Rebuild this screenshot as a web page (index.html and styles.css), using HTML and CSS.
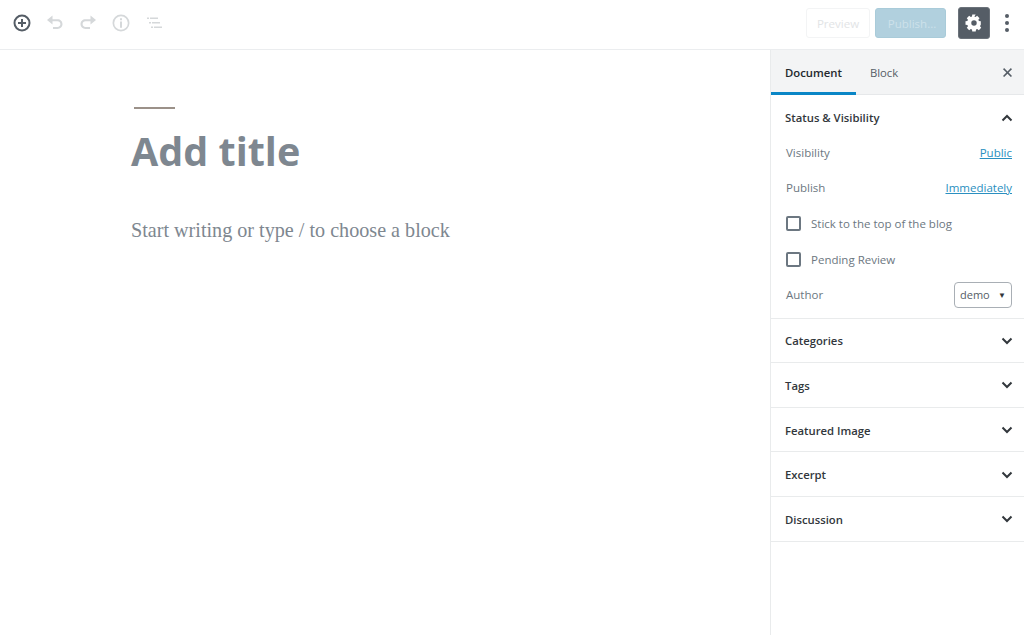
FILE: index.html
```html
<!DOCTYPE html>
<html lang="en">
<head>
    <meta charset="UTF-8">
    <meta name="viewport" content="width=device-width, initial-scale=1.0">
    <title>Add New Post</title>
    <link rel="stylesheet" href="styles.css">
</head>
<body>
    <header class="topbar">
        <div class="tools">
            <svg class="icon add" viewBox="0 0 20 20"><path d="M10 1.500a8.500 8.500 0 1 0 0 17 8.500 8.500 0 0 0 0-17zm0 2a6.500 6.500 0 1 1 0 13 6.500 6.500 0 0 1 0-13zM9 6v3H6v2h3v3h2v-3h3V9h-3V6z"/></svg>
            <svg class="icon off" viewBox="0 0 20 20"><path d="M7.500 2.500 2 7l5.500 4.500V8.200h5c1.700 0 2.900 1.200 2.900 2.900S14.200 14 12.500 14H8v2h4.500c2.900 0 5-2.100 5-4.900s-2.100-4.900-5-4.900h-5z"/></svg>
            <svg class="icon off" viewBox="0 0 20 20"><path d="M12.500 2.500 18 7l-5.500 4.500V8.200h-5c-1.700 0-2.900 1.200-2.900 2.900S5.800 14 7.500 14H12v2H7.500c-2.900 0-5-2.100-5-4.900s2.100-4.900 5-4.900h5z"/></svg>
            <svg class="icon off" viewBox="0 0 20 20"><path d="M10 1.500a8.500 8.500 0 1 0 0 17 8.500 8.500 0 0 0 0-17zm0 1.700a6.800 6.800 0 1 1 0 13.600 6.800 6.800 0 0 1 0-13.600zM9 5.200h2v2H9zm0 3.300h2v6.300H9z"/></svg>
            <svg class="icon off" viewBox="0 0 20 20"><path d="M3 4.500h2v1.400H3zm3 0h8v1.400H6zM5 9h2v1.400H5zm3 0h8v1.400H8zM7 13.500h2v1.400H7zm3 0h8v1.400h-8z"/></svg>
        </div>
        <div class="actions">
            <button class="btn-preview">Preview</button>
            <button class="btn-publish">Publish...</button>
            <button class="btn-settings">
                <svg viewBox="0 0 20 20"><path d="M18 12v-4l-2.300-.4a6 6 0 0 0-.6-1.400l1.400-1.900-2.800-2.800-1.900 1.400a6 6 0 0 0-1.400-.6L12 0H8l-.4 2.300a6 6 0 0 0-1.400.6L4.300 1.500 1.500 4.300l1.400 1.900a6 6 0 0 0-.6 1.400L0 8v4l2.300.4a6 6 0 0 0 .6 1.400l-1.400 1.900 2.800 2.800 1.900-1.400a6 6 0 0 0 1.400.6L8 20h4l.4-2.300a6 6 0 0 0 1.400-.6l1.900 1.400 2.800-2.800-1.400-1.900a6 6 0 0 0 .6-1.400zM10 13.200a3.200 3.200 0 1 1 0-6.400 3.200 3.200 0 0 1 0 6.400z" transform="translate(1.500 1.500) scale(.85)"/></svg>
            </button>
            <div class="more"><span></span><span></span><span></span></div>
        </div>
    </header>

    <div class="main">
        <section class="editor">
            <div class="title-rule"></div>
            <h1 class="title">Add title</h1>
            <p class="placeholder">Start writing or type / to choose a block</p>
        </section>

        <aside class="sidebar">
            <div class="tabs">
                <div class="tab active">Document</div>
                <div class="tab">Block</div>
                <svg class="close" viewBox="0 0 12 12"><path d="M1.500 0 6 4.500 10.500 0 12 1.500 7.500 6 12 10.500 10.500 12 6 7.500 1.500 12 0 10.500 4.500 6 0 1.500z"/></svg>
            </div>

            <div class="panel open">
                <div class="panel-head">
                    <span>Status &amp; Visibility</span>
                    <svg class="chev" viewBox="0 0 12 8"><path d="M1.500 6.500 6 2l4.500 4.500"/></svg>
                </div>
                <div class="row row-visibility"><span>Visibility</span><a href="#">Public</a></div>
                <div class="row row-publish"><span>Publish</span><a href="#">Immediately</a></div>
                <label class="check"><span class="box"></span>Stick to the top of the blog</label>
                <label class="check"><span class="box"></span>Pending Review</label>
                <div class="row row-author">
                    <span>Author</span>
                    <div class="select">demo<span class="caret">▼</span></div>
                </div>
            </div>

            <div class="panel">
                <div class="panel-head"><span>Categories</span><svg class="chev" viewBox="0 0 12 8"><path d="M1.500 1.500 6 6l4.500-4.500"/></svg></div>
            </div>
            <div class="panel">
                <div class="panel-head"><span>Tags</span><svg class="chev" viewBox="0 0 12 8"><path d="M1.500 1.500 6 6l4.500-4.500"/></svg></div>
            </div>
            <div class="panel">
                <div class="panel-head"><span>Featured Image</span><svg class="chev" viewBox="0 0 12 8"><path d="M1.500 1.500 6 6l4.500-4.500"/></svg></div>
            </div>
            <div class="panel">
                <div class="panel-head"><span>Excerpt</span><svg class="chev" viewBox="0 0 12 8"><path d="M1.500 1.500 6 6l4.500-4.500"/></svg></div>
            </div>
            <div class="panel">
                <div class="panel-head"><span>Discussion</span><svg class="chev" viewBox="0 0 12 8"><path d="M1.500 1.500 6 6l4.500-4.500"/></svg></div>
            </div>
        </aside>
    </div>
</body>
</html>
```

FILE: styles.css
```css
* {
    margin: 0;
    padding: 0;
    box-sizing: border-box;
}

html, body {
    height: 100%;
    overflow: hidden;
}

body {
    background: #fff;
    color: #32373c;
    font-family: 'Open Sans', 'Noto Sans', sans-serif;
    font-size: 11.5px;
}

.topbar {
    height: 50px;
    display: flex;
    align-items: center;
    justify-content: space-between;
    border-bottom: 1px solid #ebedef;
    padding: 0 13px 3px 12px;
}

.tools {
    display: flex;
    align-items: center;
    gap: 13px;
}

.icon {
    width: 20px;
    height: 20px;
    fill: #d5d8da;
}

.icon.add {
    fill: #555d66;
}

.actions {
    display: flex;
    align-items: center;
}

.actions button {
    font-family: inherit;
    font-size: 11.5px;
    border-radius: 3px;
}

.btn-preview {
    width: 64px;
    height: 30px;
    background: #fff;
    border: 1px solid #f3f4f5;
    color: #e2e4e6;
}

.btn-publish {
    width: 71px;
    height: 30px;
    margin-left: 5px;
    padding-left: 3px;
    background: #b1d0de;
    border: 1px solid #a9cbd9;
    color: #cde1ea;
}

.btn-settings {
    width: 32px;
    height: 32px;
    margin-left: 12px;
    background: #555d66;
    border: 1px solid #6b727a;
    display: flex;
    align-items: center;
    justify-content: center;
}

.btn-settings svg {
    width: 20px;
    height: 20px;
    fill: #fff;
}

.more {
    width: 6px;
    margin-left: 15px;
    display: flex;
    flex-direction: column;
    gap: 3px;
}

.more span {
    width: 4px;
    height: 4px;
    border-radius: 50%;
    background: #555d66;
}

.main {
    display: flex;
    height: 585px;
}

.editor {
    flex: 1;
    padding: 57px 0 0 131px;
}

.title-rule {
    width: 41px;
    height: 2px;
    margin-left: 3px;
    background: #9b9189;
}

.title {
    margin-top: 16px;
    font-size: 39.5px;
    font-weight: 700;
    line-height: 52px;
    color: #7e8790;
}

.placeholder {
    margin-top: 38px;
    font-family: 'Liberation Serif', serif;
    font-size: 20.15px;
    line-height: 30px;
    color: #7e8790;
}

.sidebar {
    width: 254px;
    border-left: 1px solid #e9ebec;
}

.tabs {
    height: 45px;
    display: flex;
    align-items: stretch;
    background: #f3f4f5;
    border-bottom: 1px solid #e6e8ea;
}

.tab {
    display: flex;
    align-items: center;
    padding: 0 14px;
    color: #555d66;
    font-size: 11.3px;
}

.tab.active {
    color: #23282d;
    font-weight: 600;
    border-bottom: 3px solid #0a86c6;
    padding-top: 3px;
    margin-bottom: -1px;
}

.close {
    width: 9px;
    height: 9px;
    fill: #555d66;
    margin: 18px 12px 0 auto;
}

.panel {
    border-bottom: 1px solid #e9ebec;
}

.panel-head {
    height: 43.6px;
    display: flex;
    align-items: center;
    justify-content: space-between;
    padding: 1px 11px 0 14px;
    font-size: 11.3px;
    font-weight: 600;
    color: #32373c;
}

.panel.open .panel-head {
    height: 44.6px;
}

.chev {
    width: 12px;
    height: 8px;
    fill: none;
    stroke: #32373c;
    stroke-width: 2;
}

.row {
    display: flex;
    align-items: center;
    justify-content: space-between;
    padding: 0 12px 0 15px;
    color: #6c7781;
}

.row a {
    color: #2a8fc0;
}

.row-visibility {
    height: 18px;
    margin-top: 4px;
}

.row-publish {
    height: 18px;
    margin-top: 17px;
}

.check {
    display: flex;
    align-items: center;
    gap: 10px;
    height: 18px;
    padding-left: 15px;
    margin-top: 18px;
    color: #6c7781;
}

.box {
    width: 15px;
    height: 15px;
    border: 2px solid #6c7781;
    border-radius: 2px;
}

.row-author {
    height: 26px;
    margin-top: 13px;
    margin-bottom: 10px;
}

.select {
    width: 58px;
    height: 26px;
    display: flex;
    align-items: center;
    justify-content: space-between;
    padding: 0 5px 0 5px;
    border: 1px solid #a9afb5;
    border-radius: 4px;
    color: #555d66;
    font-size: 11px;
}

.caret {
    font-size: 8px;
    color: #32373c;
}
```
